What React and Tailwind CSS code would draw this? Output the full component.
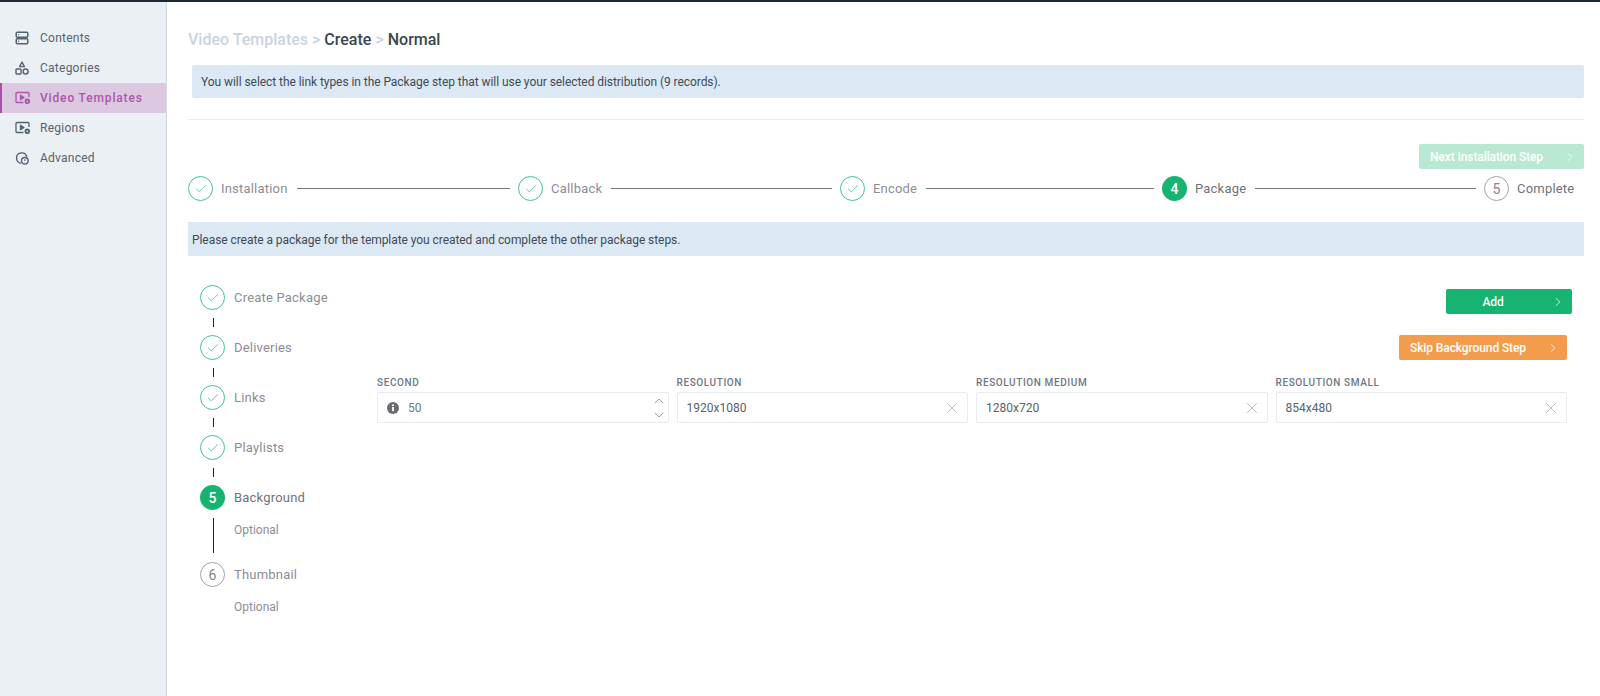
import { Check, ChevronRight, ChevronUp, ChevronDown, X } from 'lucide-react';

const FONT = "font-['Roboto','Liberation_Sans',sans-serif]";

// Iconos del menu lateral
const ContentsIcon = () => (
    <svg width="14" height="14" viewBox="0 0 14 14" fill="none" stroke="currentColor" strokeWidth="1.5">
        <rect x="1.25" y="1.25" width="11.5" height="5" rx="1" />
        <rect x="1.25" y="7.75" width="11.5" height="5" rx="1" />
        <path d="M3 3.75h1.2M3 10.25h1.2" strokeWidth="1" />
    </svg>
);

const CategoriesIcon = () => (
    <svg width="14" height="14" viewBox="0 0 14 14" fill="none" stroke="currentColor" strokeWidth="1.4">
        <path d="M7 1 9.4 5.6H4.6Z" strokeLinejoin="round" />
        <rect x="1" y="8" width="5" height="5" rx="0.8" />
        <circle cx="10.6" cy="10.5" r="2.5" />
    </svg>
);

const VideoGearIcon = () => (
    <svg width="16" height="14" viewBox="0 0 16 14" fill="none" stroke="currentColor" strokeWidth="1.3">
        <path d="M8.5 11.5H2a1 1 0 0 1-1-1V2.5a1 1 0 0 1 1-1h11a1 1 0 0 1 1 1V6" />
        <path d="M5.5 4.3v4.4L9 6.5Z" fill="currentColor" strokeLinejoin="round" />
        <circle cx="12.3" cy="10.3" r="1.7" strokeWidth="1.7" />
        <path d="M12.3 7.5v1M12.3 12.1v1M9.5 10.3h1M14.1 10.3h1M10.3 8.3l.7.7M13.6 11.6l.7.7M14.3 8.3l-.7.7M11 11.6l-.7.7" />
    </svg>
);

const AdvancedIcon = () => (
    <svg width="14" height="14" viewBox="0 0 14 14" fill="none" stroke="currentColor" strokeWidth="1.4">
        <path d="M5.8 12.2A5.2 5.2 0 1 1 11.8 5.8" />
        <circle cx="9.8" cy="9.8" r="3.3" />
        <path d="M9.8 8.2v1.8M9.8 11v.4" strokeWidth="1" />
    </svg>
);

const menu = [
    { label: 'Contents', icon: <ContentsIcon /> },
    { label: 'Categories', icon: <CategoriesIcon /> },
    { label: 'Video Templates', icon: <VideoGearIcon />, active: true },
    { label: 'Regions', icon: <VideoGearIcon /> },
    { label: 'Advanced', icon: <AdvancedIcon /> },
];

const mainSteps = [
    { label: 'Installation', state: 'done', width: 'w-[330px]' },
    { label: 'Callback', state: 'done', width: 'w-[322px]' },
    { label: 'Encode', state: 'done', width: 'w-[322px]' },
    { label: 'Package', number: 4, state: 'active', width: 'w-[322px]' },
    { label: 'Complete', number: 5, state: 'todo', width: '' },
];

const packageSteps = [
    { label: 'Create Package', state: 'done' },
    { label: 'Deliveries', state: 'done' },
    { label: 'Links', state: 'done' },
    { label: 'Playlists', state: 'done' },
    { label: 'Background', number: 5, state: 'active', optional: true },
    { label: 'Thumbnail', number: 6, state: 'todo', optional: true },
];

const resolutions = [
    { label: 'Resolution', value: '1920x1080' },
    { label: 'Resolution Medium', value: '1280x720' },
    { label: 'Resolution Small', value: '854x480' },
];

const StepCircle = ({ step }) => {
    if (step.state === 'done') {
        return (
            <span className="flex h-[25px] w-[25px] shrink-0 items-center justify-center rounded-full border border-[#3fc48f] text-[#3fc48f]">
                <Check size={14} strokeWidth={1.4} />
            </span>
        );
    }
    if (step.state === 'active') {
        return (
            <span className="flex h-[25px] w-[25px] shrink-0 items-center justify-center rounded-full bg-[#16b371] text-sm font-medium text-white">
                {step.number}
            </span>
        );
    }
    return (
        <span className="flex h-[25px] w-[25px] shrink-0 items-center justify-center rounded-full border border-[#a3a3a8] text-sm text-[#85858c]">
            {step.number}
        </span>
    );
};

const ActionButton = ({ label, color, width, center }) => (
    <button className={`flex h-[25px] items-center justify-between rounded-[2px] pl-[11px] pr-[7px] text-xs font-medium tracking-[-0.1px] text-white ${color} ${width}`}>
        <span className={center ? 'flex-1 pr-[22px] text-center' : ''}>{label}</span>
        <ChevronRight size={14} strokeWidth={1.3} />
    </button>
);

const App = () => {
    return (
        <div className={`flex h-[696px] flex-col overflow-hidden bg-white ${FONT}`}>
            <div className="h-[2px] shrink-0 bg-[#1f2933]" />
            <div className="flex flex-1">
                {/* Menu lateral */}
                <aside className="w-[167px] shrink-0 border-r border-[#cfdbe6] bg-[#ebf0f5] pt-[21px]">
                    {menu.map((item) => (
                        <div
                            key={item.label}
                            className={`flex h-[30px] items-center border-l-[2px] pl-[13px] text-xs ${
                                item.active
                                    ? 'border-[#a84fa8] bg-[#dcc8e1] font-medium tracking-[0.85px] text-[#ac56ac]'
                                    : 'border-transparent tracking-[0.25px] text-[#56626e]'
                            }`}
                        >
                            <span className="flex w-[25px] shrink-0 items-center">{item.icon}</span>
                            {item.label}
                        </div>
                    ))}
                </aside>

                {/* Contenido */}
                <main className="flex-1 pl-[21px] pr-[16px]">
                    <div className="mt-[28px] flex h-[20px] items-center gap-[4px] text-base font-medium leading-5">
                        <span className="text-[#c8d4e0]">Video Templates</span>
                        <span className="text-[#c8d4e0]">&gt;</span>
                        <span className="text-[#3a4652]">Create</span>
                        <span className="text-[#c8d4e0]">&gt;</span>
                        <span className="text-[#3a4652]">Normal</span>
                    </div>

                    <div className="ml-[4px] mt-[15px] flex h-[33px] items-center rounded-[2px] bg-[#dce9f5] pl-[9px] text-xs tracking-[-0.06px] text-[#3f4a57]">
                        You will select the link types in the Package step that will use your selected distribution (9 records).
                    </div>

                    <div className="mt-[21px] h-px bg-[#e8edf2]" />

                    <div className="mt-[24px] flex justify-end">
                        <ActionButton label="Next Installation Step" color="bg-[#b9e8d3]" width="w-[165px]" />
                    </div>

                    <div className="mt-[7px] flex h-[25px] items-center">
                        {mainSteps.map((step, index) => (
                            <div key={step.label} className={`flex items-center ${step.width}`}>
                                <StepCircle step={step} />
                                <span className={`ml-[8px] text-[13px] tracking-[0.2px] ${step.state === 'done' ? 'text-[#8d8d96]' : 'text-[#71717a]'}`}>
                                    {step.label}
                                </span>
                                {index < mainSteps.length - 1 && <span className="ml-[9px] mr-[8px] h-px flex-1 bg-[#777]" />}
                            </div>
                        ))}
                    </div>

                    <div className="mt-[21px] flex h-[34px] items-center bg-[#dce9f5] pl-[4px] pt-[1px] text-xs tracking-[-0.06px] text-[#3f4a57]">
                        Please create a package for the template you created and complete the other package steps.
                    </div>

                    <div className="mt-[29px] flex">
                        {/* Pasos del paquete */}
                        <div className="ml-[12px] w-[177px] shrink-0">
                            {packageSteps.map((step, index) => (
                                <div key={step.label}>
                                    <div className="flex h-[25px] items-center">
                                        <StepCircle step={step} />
                                        <span className={`ml-[9px] text-[13px] tracking-[0.2px] ${step.state === 'active' ? 'text-[#71717a]' : 'text-[#8d8d96]'}`}>
                                            {step.label}
                                        </span>
                                    </div>
                                    {step.optional ? (
                                        <div className="flex h-[52px]">
                                            <div className="flex w-[26px] justify-center pt-[8px]">
                                                {index < packageSteps.length - 1 && <span className="h-[35px] w-px bg-[#222]" />}
                                            </div>
                                            <span className="ml-[8px] mt-[12px] text-xs leading-4 text-[#8d8d96]">Optional</span>
                                        </div>
                                    ) : (
                                        <div className="flex h-[25px] w-[26px] justify-center pt-[8px]">
                                            <span className="h-[9px] w-px bg-[#222]" />
                                        </div>
                                    )}
                                </div>
                            ))}
                        </div>

                        {/* Formulario */}
                        <div className="flex-1">
                            <div className="flex justify-end pt-[4px] pr-[12px]">
                                <ActionButton label="Add" color="bg-[#16b371]" width="w-[126px]" center />
                            </div>
                            <div className="mt-[21px] flex justify-end pr-[17px]">
                                <ActionButton label="Skip Background Step" color="bg-[#f39c4b]" width="w-[168px]" />
                            </div>

                            <div className="mt-[17px] grid grid-cols-4 gap-x-[8px] pr-[17px]">
                                <div>
                                    <label className="block h-[15px] text-[10px] font-medium uppercase leading-3 tracking-[0.6px] text-[#6d7885]">Second</label>
                                    <div className="flex h-[31px] items-center rounded-[2px] border border-[#e6ecf1] pl-[9px] pr-px text-xs text-[#6d7885]">
                                        <svg width="12" height="12" viewBox="0 0 12 12" className="shrink-0">
                                            <circle cx="6" cy="6" r="6" fill="#6b6b70" />
                                            <rect x="5.1" y="5" width="1.8" height="4.2" fill="#fff" />
                                            <circle cx="6" cy="3.3" r="1" fill="#fff" />
                                        </svg>
                                        <span className="ml-[9px] flex-1">50</span>
                                        <div className="flex flex-col text-[#85858c]">
                                            <ChevronUp size={16} strokeWidth={1.2} className="-mb-px" />
                                            <ChevronDown size={16} strokeWidth={1.2} className="-mt-px" />
                                        </div>
                                    </div>
                                </div>
                                {resolutions.map((field) => (
                                    <div key={field.label}>
                                        <label className="block h-[15px] text-[10px] font-medium uppercase leading-3 tracking-[0.6px] text-[#6d7885]">{field.label}</label>
                                        <div className="flex h-[31px] items-center justify-between rounded-[2px] border border-[#e6ecf1] pl-[9px] pr-[6px] text-xs text-[#566270]">
                                            <span>{field.value}</span>
                                            <X size={18} strokeWidth={0.9} className="text-[#9a9aa2]" />
                                        </div>
                                    </div>
                                ))}
                            </div>
                        </div>
                    </div>
                </main>
            </div>
        </div>
    );
};

export default App;
